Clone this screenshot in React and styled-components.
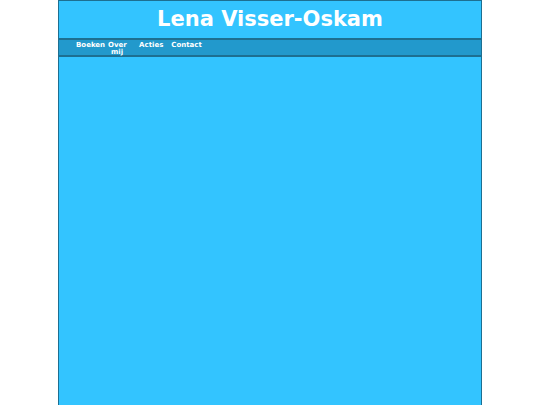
import React from "react";
import styled, { createGlobalStyle } from "styled-components";

const Global = createGlobalStyle`
  html, body { margin: 0; padding: 0; background: #ffffff; height: 100%; }
  #root { height: 100%; }
  body { font-family: "DejaVu Sans", Verdana, sans-serif; }
`;

const Page = styled.div`
  width: 422px;
  min-height: 405px;
  height: 100%;
  margin: 0 auto;
  background: #33c4ff;
  border: 1px solid #1d6f91;
  border-bottom: none;
  box-sizing: content-box;
`;

const Header = styled.header`
  height: 37px;
  display: flex;
  justify-content: center;
  align-items: center;
`;

const Title = styled.h1`
  margin: 0;
  font-size: 21px;
  font-weight: bold;
  color: #ffffff;
  line-height: 1;
`;

const Nav = styled.nav`
  background: #2299cc;
  border-top: 2px solid #1d6f91;
  border-bottom: 2px solid #1d6f91;
  height: 13px;
  padding: 2px 0 0 17px;
`;

const Menu = styled.ul`
  list-style: none;
  margin: 0;
  padding: 0;
  display: flex;
  align-items: flex-start;
`;

const Item = styled.li`
  font-size: 7px;
  font-weight: bold;
  color: #ffffff;
  line-height: 7px;
  text-align: center;
  flex: none;
  margin-right: ${(p) => p.$space || 0}px;
  width: ${(p) => (p.$w ? `${p.$w}px` : "auto")};
`;

export default function App() {
  return (
    <>
      <Global />
      <Page>
        <Header>
          <Title>Lena Visser-Oskam</Title>
        </Header>
        <Nav>
          <Menu>
            <Item $space={3}>Boeken</Item>
            <Item $w={18} $space={13}>Over mij</Item>
            <Item $space={8}>Acties</Item>
            <Item>Contact</Item>
          </Menu>
        </Nav>
      </Page>
    </>
  );
}
